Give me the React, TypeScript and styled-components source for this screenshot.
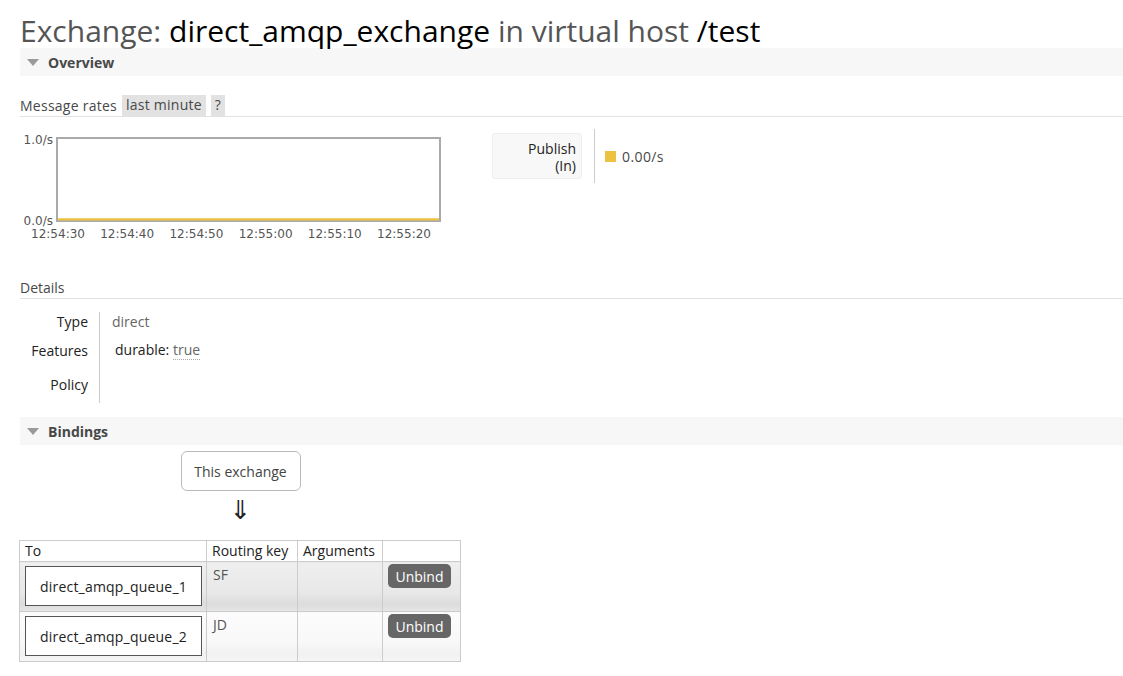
import React from "react";
import styled, { createGlobalStyle } from "styled-components";

const Global = createGlobalStyle`
  html, body { margin: 0; padding: 0; background: #fff; }
  body { font-family: "Open Sans", "Noto Sans", sans-serif; color: #484848; overflow: hidden; }
`;

const Page = styled.div`
  padding: 14px 0 0 20px;
  width: 1103px;
`;

const Title = styled.h1`
  margin: 0;
  font-weight: normal;
  font-size: 30px;
  line-height: 34px;
  color: #555;
  white-space: nowrap;
`;

const Strong = styled.span`
  color: #000;
`;

const SectionBar = styled.div<{ $mt?: number }>`
  height: 28px;
  background: #f7f7f7;
  display: flex;
  align-items: center;
  gap: 9px;
  padding-left: 7px;
  font-weight: bold;
  font-size: 14px;
  color: #484848;
  margin-top: ${(p) => p.$mt ?? 0}px;
`;

const Tri = styled.span`
  width: 0;
  height: 0;
  border-left: 6px solid transparent;
  border-right: 6px solid transparent;
  border-top: 7px solid #9a9a9a;
`;

const RatesRow = styled.div`
  margin-top: 19px;
  display: flex;
  align-items: flex-end;
  gap: 5px;
  border-bottom: 1px solid #e2e2e2;
  height: 21px;
  font-size: 14px;
  letter-spacing: 0.25px;
`;

const RatesLabel = styled.span`
  line-height: 20px;
`;

const Pill = styled.span`
  background: #e2e2e2;
  color: #484848;
  padding: 0 4px;
  height: 21px;
  line-height: 20px;
`;

const ChartRow = styled.div`
  display: flex;
  align-items: flex-start;
  margin-top: 11px;
`;

const ChartSvg = styled.svg`
  display: block;
  flex: none;
`;

const RateBox = styled.div`
  margin-left: 27px;
  margin-top: 5px;
  width: 90px;
  height: 46px;
  box-sizing: border-box;
  background: #f8f8f8;
  border: 1px solid #eee;
  border-radius: 3px;
  text-align: right;
  padding: 6px 5px 0 0;
  font-size: 14px;
  line-height: 17px;
  color: #222;
`;

const VSep = styled.div`
  width: 1px;
  height: 54px;
  background: #ccc;
  margin-left: 12px;
  margin-top: 1px;
`;

const Legend = styled.div`
  display: flex;
  align-items: center;
  gap: 6px;
  margin: 19px 0 0 10px;
  font-size: 14px;
  letter-spacing: 0.4px;
  color: #484848;
`;

const Swatch = styled.span`
  width: 11px;
  height: 11px;
  background: #edc240;
`;

const SubHeading = styled.div`
  margin-top: 35px;
  font-size: 14px;
  line-height: 18px;
  border-bottom: 1px solid #e2e2e2;
  padding-bottom: 1px;
`;

const DetailsGrid = styled.div`
  margin-top: 13px;
  display: grid;
  grid-template-columns: 80px auto;
  grid-template-rows: 22px 32px 37px;
  width: 400px;
  font-size: 14px;
`;

const DLabel = styled.div<{ $al?: string }>`
  padding-right: 11px;
  border-right: 1px solid #ccc;
  color: #222;
  display: flex;
  justify-content: flex-end;
  align-items: ${(p) => p.$al ?? "flex-start"};
`;

const DValue = styled.div<{ $pl?: number; $pt?: number }>`
  padding-left: ${(p) => p.$pl ?? 12}px;
  padding-top: ${(p) => p.$pt ?? 0}px;
  color: #666;
`;

const Key = styled.span`
  color: #222;
`;

const Dotted = styled.span`
  color: #666;
  border-bottom: 1px dotted #aaa;
`;

const Flow = styled.div`
  display: flex;
  flex-direction: column;
  align-items: center;
  width: 441px;
`;

const ExBox = styled.div`
  margin-top: 6px;
  width: 120px;
  height: 40px;
  box-sizing: border-box;
  border: 1px solid #bbb;
  border-radius: 6px;
  display: flex;
  align-items: center;
  justify-content: center;
  font-size: 14px;
  color: #444;
`;

const Arrow = styled.div`
  font-family: "DejaVu Sans", sans-serif;
  font-size: 26px;
  line-height: 28px;
  margin-top: 5px;
  color: #222;
`;

const Table = styled.table`
  margin-top: 16px;
  margin-left: -1px;
  border-collapse: collapse;
  font-size: 14px;
  color: #222;
`;

const Th = styled.th<{ $w: number }>`
  width: ${(p) => p.$w}px;
  box-sizing: border-box;
  border: 1px solid #ccc;
  font-weight: normal;
  text-align: left;
  height: 21px;
  padding: 0 5px;
  line-height: 18px;
  white-space: nowrap;
`;

const Tr = styled.tr<{ $alt: boolean }>`
  td {
    background: ${(p) =>
      p.$alt
        ? "linear-gradient(#efefef 0%, #e8e8e8 60%, #dcdcdc 85%, #e6e6e6 100%)"
        : "linear-gradient(#fcfcfc 0%, #f8f8f8 60%, #f1f1f1 85%, #f6f6f6 100%)"};
  }
`;

const Td = styled.td`
  border: 1px solid #ccc;
  height: 50px;
  box-sizing: border-box;
  vertical-align: top;
  padding: 3px 6px;
  color: #555;
`;

const QueueBox = styled.div`
  width: 177px;
  height: 40px;
  box-sizing: border-box;
  border: 1px solid #555;
  background: #fff;
  display: flex;
  align-items: center;
  justify-content: center;
  color: #222;
  letter-spacing: 0.2px;
`;

const QueueTd = styled.td`
  border: 1px solid #ccc;
  padding: 4px 4px 4px 5px;
  vertical-align: top;
`;

const Unbind = styled.button`
  width: 63px;
  height: 24px;
  border: none;
  border-radius: 5px;
  background: #666;
  color: #fff;
  font-family: inherit;
  font-size: 14px;
  padding: 0;
  margin: -1px 0 0 -1px;
  display: block;
`;

const ticks = ["12:54:30", "12:54:40", "12:54:50", "12:55:00", "12:55:10", "12:55:20"];

function Chart() {
  return (
    <ChartSvg width={445} height={116} viewBox="0 0 445 116">
      <g fontFamily="'DejaVu Sans', sans-serif" fontSize="12" fill="#545454">
        <text x={33} y={16} textAnchor="end">1.0/s</text>
        <text x={33} y={97} textAnchor="end">0.0/s</text>
        {ticks.map((t, i) => (
          <text key={t} x={38 + i * 69.2} y={110} textAnchor="middle">
            {t}
          </text>
        ))}
      </g>
      <rect x={37} y={10} width={383} height={83} fill="#fff" stroke="#aaa" strokeWidth={2} />
      <rect x={38} y={90} width={381} height={2} fill="#f5dfa0" />
      <line x1={38} y1={91.5} x2={419} y2={91.5} stroke="#edc240" strokeWidth={2} />
    </ChartSvg>
  );
}

export default function App() {
  return (
    <>
      <Global />
      <Page>
        <Title>
          Exchange: <Strong>direct_amqp_exchange</Strong> in virtual host <Strong>/test</Strong>
        </Title>
        <SectionBar>
          <Tri />
          Overview
        </SectionBar>
        <RatesRow>
          <RatesLabel>Message rates</RatesLabel>
          <Pill>last minute</Pill>
          <Pill>?</Pill>
        </RatesRow>
        <ChartRow>
          <Chart />
          <RateBox>
            Publish
            <br />
            (In)
          </RateBox>
          <VSep />
          <Legend>
            <Swatch />
            0.00/s
          </Legend>
        </ChartRow>
        <SubHeading>Details</SubHeading>
        <DetailsGrid>
          <DLabel>Type</DLabel>
          <DValue $pl={12}>direct</DValue>
          <DLabel $al="center">Features</DLabel>
          <DValue $pl={15} $pt={6}>
            <Key>durable:</Key> <Dotted>true</Dotted>
          </DValue>
          <DLabel $al="center">Policy</DLabel>
          <DValue />
        </DetailsGrid>
        <SectionBar $mt={14}>
          <Tri />
          Bindings
        </SectionBar>
        <Flow>
          <ExBox>This exchange</ExBox>
          <Arrow>⇓</Arrow>
        </Flow>
        <Table>
          <thead>
            <tr>
              <Th $w={187}>To</Th>
              <Th $w={91}>Routing key</Th>
              <Th $w={85}>Arguments</Th>
              <Th $w={78}></Th>
            </tr>
          </thead>
          <tbody>
            <Tr $alt={true}>
              <QueueTd>
                <QueueBox>direct_amqp_queue_1</QueueBox>
              </QueueTd>
              <Td>SF</Td>
              <Td></Td>
              <Td>
                <Unbind>Unbind</Unbind>
              </Td>
            </Tr>
            <Tr $alt={false}>
              <QueueTd>
                <QueueBox>direct_amqp_queue_2</QueueBox>
              </QueueTd>
              <Td>JD</Td>
              <Td></Td>
              <Td>
                <Unbind>Unbind</Unbind>
              </Td>
            </Tr>
          </tbody>
        </Table>
      </Page>
    </>
  );
}
